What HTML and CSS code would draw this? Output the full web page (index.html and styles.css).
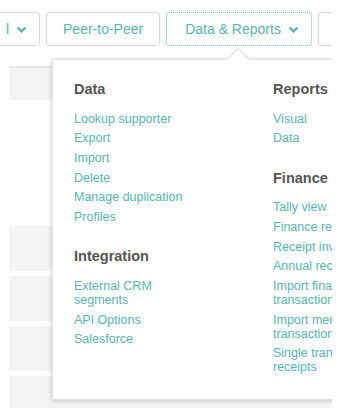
FILE: index.html
```html
<!DOCTYPE html>
<html lang="en">
<head>
    <meta charset="UTF-8">
    <meta name="viewport" content="width=device-width, initial-scale=1.0">
    <title>Data &amp; Reports</title>
    <link rel="stylesheet" href="styles.css">
</head>
<body>
    <div class="frame">
        <nav class="toolbar">
            <a class="btn has-menu scrolled"><span class="label">Email</span> <svg width="11" height="7" viewBox="0 0 11 7"><polyline points="1.5,1.5 5.5,5.3 9.5,1.5" fill="none" stroke="#5ab4b0" stroke-width="2.3"/></svg></a>
            <a class="btn">Peer-to-Peer</a>
            <a class="btn has-menu open">Data &amp; Reports <svg width="11" height="7" viewBox="0 0 11 7"><polyline points="1.5,1.5 5.5,5.3 9.5,1.5" fill="none" stroke="#5ab4b0" stroke-width="2.3"/></svg></a>
            <a class="btn">Settings</a>
        </nav>

        <div class="table">
            <div class="thead"></div>
            <div class="spacer"></div>
            <div class="row"></div>
            <div class="row"></div>
            <div class="row"></div>
            <div class="row last"></div>
        </div>

        <div class="menu">
            <div class="col">
                <div class="group">
                    <h3>Data</h3>
                    <ul>
                        <li><a>Lookup supporter</a></li>
                        <li><a>Export</a></li>
                        <li><a>Import</a></li>
                        <li><a>Delete</a></li>
                        <li><a>Manage duplication</a></li>
                        <li><a>Profiles</a></li>
                    </ul>
                </div>
                <div class="group">
                    <h3>Integration</h3>
                    <ul>
                        <li><a>External CRM segments</a></li>
                        <li><a>API Options</a></li>
                        <li><a>Salesforce</a></li>
                    </ul>
                </div>
            </div>
            <div class="col">
                <div class="group">
                    <h3>Reports</h3>
                    <ul>
                        <li><a>Visual</a></li>
                        <li><a>Data</a></li>
                    </ul>
                </div>
                <div class="group">
                    <h3>Finance</h3>
                    <ul>
                        <li><a>Tally view</a></li>
                        <li><a>Finance reports</a></li>
                        <li><a>Receipt invoices</a></li>
                        <li><a>Annual receipts</a></li>
                        <li><a>Import finance transactions</a></li>
                        <li><a>Import membership transactions</a></li>
                        <li><a>Single transaction receipts</a></li>
                    </ul>
                </div>
            </div>
        </div>
    </div>
</body>
</html>
```

FILE: styles.css
```css
html, body { margin: 0; padding: 0; background-color: #ffffff; }
body { font-family: "Liberation Sans", Arial, sans-serif; }
.frame { width: 332px; height: 417px; overflow: hidden; position: relative; }

.toolbar { display: flex; gap: 6px; padding-top: 12px; margin-left: -43px; white-space: nowrap; }
.btn { flex: none; height: 34px; box-sizing: border-box; border: 1px solid #d9d9d9; border-radius: 3px; background-color: #ffffff; color: #5ab4b0; font-size: 14px; padding: 0 16px; display: flex; align-items: center; }
.btn.has-menu { padding-right: 12px; }
.btn svg { margin-left: 7px; }
.btn.open { border: 1px dotted #6cbcb7; padding-left: 18px; }
.btn.scrolled .label { display: inline-block; clip-path: inset(0 0 0 31px); }

.table { margin: 20px 0 0 9px; display: flex; flex-direction: column; gap: 5px; }
.thead { height: 32px; background-color: #f4f4f4; border-top: 2px solid #e6e6e6; margin-bottom: -5px; }
.spacer { height: 121px; }
.row { height: 45px; background-color: #f4f4f4; }
.row.last { height: 32px; }

.menu { position: absolute; left: 52px; top: 59px; width: 420px; height: 341px; box-sizing: border-box; background-color: #ffffff; border: 1px solid #e2e2e2; box-shadow: 0 1px 5px rgba(0, 0, 0, 0.2); padding: 21px 0 0 21px; display: flex; gap: 79px; }
.menu::before { content: ""; position: absolute; left: 177px; top: -9px; width: 15px; height: 15px; background-color: #ffffff; border-top: 1px solid #dcdcdc; border-left: 1px solid #dcdcdc; transform: rotate(45deg); }
.col { width: 120px; flex: none; }
.group + .group { margin-top: 24.5px; }
.group h3 { margin: 0 0 13.5px; font-size: 14.5px; line-height: 17px; font-weight: bold; color: #555555; }
.group ul { list-style: none; margin: 0; padding: 0; }
.group li { font-size: 12.5px; line-height: 14px; color: #5ab4b0; }
.group li + li { margin-top: 5.7px; }
.group a { color: inherit; text-decoration: none; }
```
